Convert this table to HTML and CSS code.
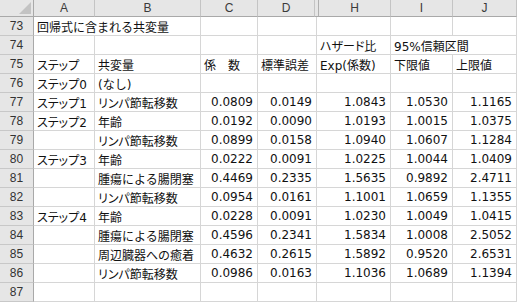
FILE: index.html
```html
<!DOCTYPE html>
<html lang="ja">
<head>
<meta charset="utf-8">
<link rel="stylesheet" href="styles.css">
</head>
<body>
<div class="sheet">
  <div class="colhead">
    <div class="hc corner"><svg width="12" height="12" viewBox="0 0 12 12"><polygon points="12,0 12,12 0,12" fill="#c3c3c3"/></svg></div>
    <div class="hc">A</div>
    <div class="hc">B</div>
    <div class="hc">C</div>
    <div class="hc">D</div>
    <div class="hc hid"></div>
    <div class="hc">H</div>
    <div class="hc">I</div>
    <div class="hc">J</div>
  </div>

  <div class="row"><div class="rh">73</div><div class="c s2">回帰式に含まれる共変量</div><div class="c"></div><div class="c"></div><div class="c"></div><div class="c"></div><div class="c"></div></div>
  <div class="row"><div class="rh">74</div><div class="c"></div><div class="c"></div><div class="c"></div><div class="c"></div><div class="c p">ハザード比</div><div class="c s2">95%信頼区間</div></div>
  <div class="row"><div class="rh">75</div><div class="c p">ステップ</div><div class="c">共変量</div><div class="c">係　数</div><div class="c">標準誤差</div><div class="c">Exp(係数)</div><div class="c">下限値</div><div class="c">上限値</div></div>
  <div class="row"><div class="rh">76</div><div class="c p">ステップ0</div><div class="c">(なし)</div><div class="c"></div><div class="c"></div><div class="c"></div><div class="c"></div><div class="c"></div></div>
  <div class="row"><div class="rh">77</div><div class="c p">ステップ1</div><div class="c p">リンパ節転移数</div><div class="c n">0.0809</div><div class="c n">0.0149</div><div class="c n">1.0843</div><div class="c n">1.0530</div><div class="c n">1.1165</div></div>
  <div class="row"><div class="rh">78</div><div class="c p">ステップ2</div><div class="c">年齢</div><div class="c n">0.0192</div><div class="c n">0.0090</div><div class="c n">1.0193</div><div class="c n">1.0015</div><div class="c n">1.0375</div></div>
  <div class="row"><div class="rh">79</div><div class="c"></div><div class="c p">リンパ節転移数</div><div class="c n">0.0899</div><div class="c n">0.0158</div><div class="c n">1.0940</div><div class="c n">1.0607</div><div class="c n">1.1284</div></div>
  <div class="row"><div class="rh">80</div><div class="c p">ステップ3</div><div class="c">年齢</div><div class="c n">0.0222</div><div class="c n">0.0091</div><div class="c n">1.0225</div><div class="c n">1.0044</div><div class="c n">1.0409</div></div>
  <div class="row"><div class="rh">81</div><div class="c"></div><div class="c">腫瘍による腸閉塞</div><div class="c n">0.4469</div><div class="c n">0.2335</div><div class="c n">1.5635</div><div class="c n">0.9892</div><div class="c n">2.4711</div></div>
  <div class="row"><div class="rh">82</div><div class="c"></div><div class="c p">リンパ節転移数</div><div class="c n">0.0954</div><div class="c n">0.0161</div><div class="c n">1.1001</div><div class="c n">1.0659</div><div class="c n">1.1355</div></div>
  <div class="row"><div class="rh">83</div><div class="c p">ステップ4</div><div class="c">年齢</div><div class="c n">0.0228</div><div class="c n">0.0091</div><div class="c n">1.0230</div><div class="c n">1.0049</div><div class="c n">1.0415</div></div>
  <div class="row"><div class="rh">84</div><div class="c"></div><div class="c">腫瘍による腸閉塞</div><div class="c n">0.4596</div><div class="c n">0.2341</div><div class="c n">1.5834</div><div class="c n">1.0008</div><div class="c n">2.5052</div></div>
  <div class="row"><div class="rh">85</div><div class="c"></div><div class="c">周辺臓器への癒着</div><div class="c n">0.4632</div><div class="c n">0.2615</div><div class="c n">1.5892</div><div class="c n">0.9520</div><div class="c n">2.6531</div></div>
  <div class="row"><div class="rh">86</div><div class="c"></div><div class="c p">リンパ節転移数</div><div class="c n">0.0986</div><div class="c n">0.0163</div><div class="c n">1.1036</div><div class="c n">1.0689</div><div class="c n">1.1394</div></div>
  <div class="row"><div class="rh">87</div><div class="c"></div><div class="c"></div><div class="c"></div><div class="c"></div><div class="c"></div><div class="c"></div><div class="c"></div></div>
</div>
</body>
</html>
```

FILE: styles.css
```css
* { box-sizing: border-box; }
html, body {
  margin: 0;
  padding: 0;
  background: #ffffff;
}
body {
  font-family: "DejaVu Sans", "Noto Sans CJK JP", sans-serif;
  font-size: 12px;
  color: #111;
  width: 517px;
  height: 303px;
  overflow: hidden;
}
.sheet {
  display: flex;
  flex-direction: column;
  width: 517px;
}
.colhead {
  display: grid;
  grid-template-columns: 34px 61px 106px 57px 57px 4px 72px 62px 64px;
  height: 17px;
}
.hc {
  background: #e6e6e6;
  border-right: 1px solid #c4c4c4;
  border-bottom: 1px solid #a9a9a9;
  display: flex;
  align-items: center;
  justify-content: center;
  font-family: "Liberation Sans", "DejaVu Sans", sans-serif;
  font-size: 12px;
  color: #3a3a3a;
}
.hc.hid { border-right: 1px solid #b0b0b0; }
.corner {
  align-items: flex-end;
  justify-content: flex-end;
  padding: 0 2px 2px 0;
  border-right: 1px solid #a9a9a9;
}
.corner svg { display: block; }
.row {
  display: grid;
  grid-template-columns: 34px 61px 106px 57px 59px 74px 62px 64px;
  height: 19px;
}
.rh {
  background: #e6e6e6;
  border-right: 1px solid #a9a9a9;
  border-bottom: 1px solid #c8c8c8;
  display: flex;
  align-items: center;
  justify-content: center;
  font-family: "Liberation Sans", "DejaVu Sans", sans-serif;
  font-size: 12px;
  color: #333;
}
.c {
  border-right: 1px solid #d6d6d6;
  border-bottom: 1px solid #d6d6d6;
  display: flex;
  align-items: center;
  padding: 0 3px 0 3px;
  white-space: nowrap;
  overflow: visible;
}
.c.p { font-feature-settings: "palt"; }
.c.s2 { grid-column: span 2; }
.c.n {
  justify-content: flex-end;
  padding-right: 4px;
}
```
